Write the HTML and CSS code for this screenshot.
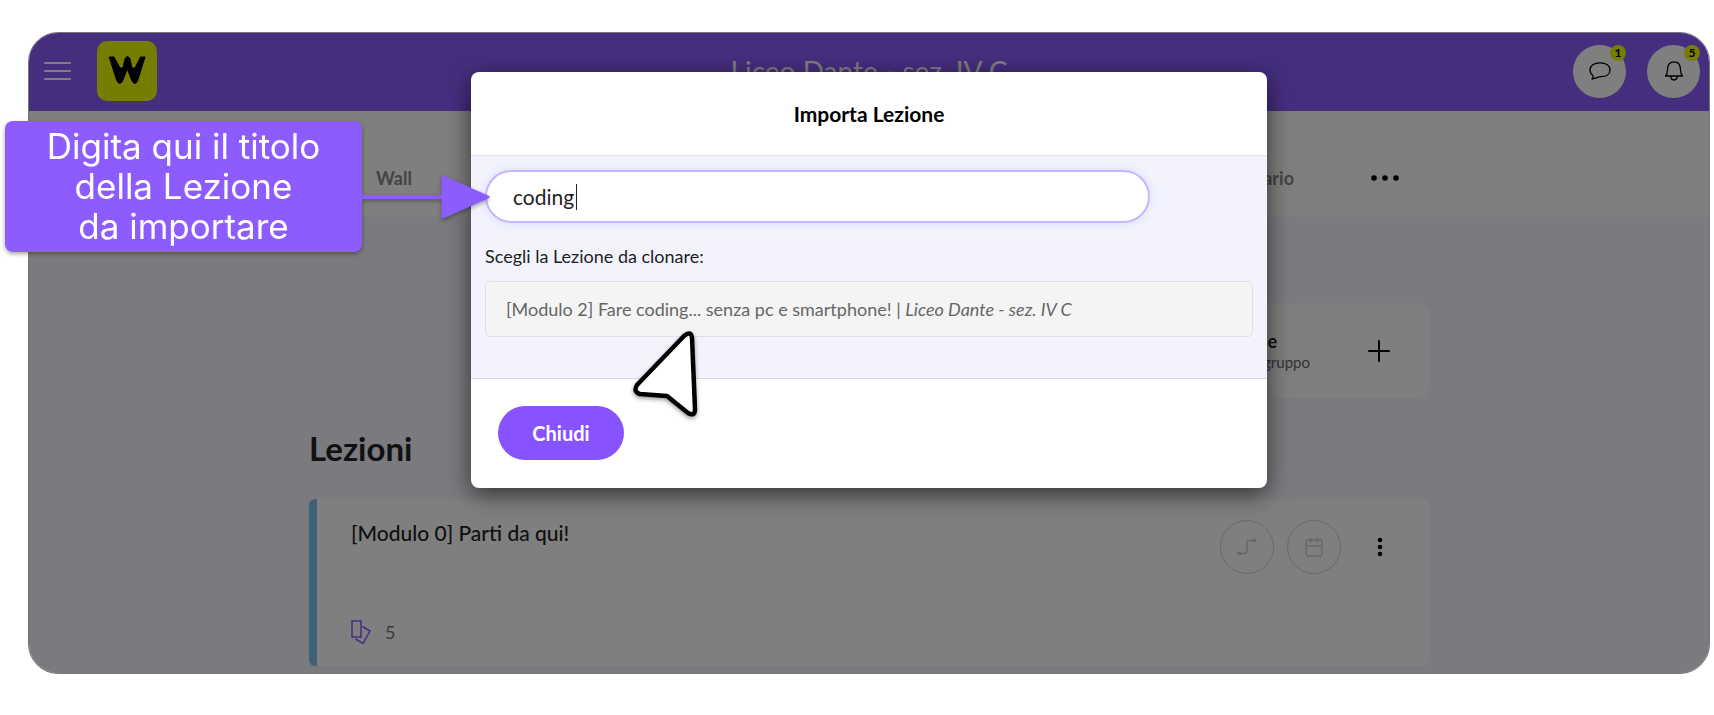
FILE: index.html
```
<!DOCTYPE html>
<html lang="it">
<head>
    <meta charset="UTF-8">
    <meta name="viewport" content="width=device-width, initial-scale=1.0">
    <title>Importa Lezione</title>
    <link rel="stylesheet" href="styles.css">
</head>
<body>
    <div class="app">
        <header class="topbar">
            <button class="menu-btn" aria-label="Menu"><span></span><span></span><span></span></button>
            <a class="logo" href="#" aria-label="Home">
                <svg viewBox="0 0 60 60" fill="none" stroke="#000" stroke-linecap="round" stroke-linejoin="round">
                    <path d="M12.500 16H17L23 27H26L28 18Q30.500 13 33 18L35 27H38L43.500 16H48L40.500 40Q38 45 35 40L30.300 28L25.500 40Q22.500 45 20 40Z" fill="#000" stroke-width="1"/>
                </svg>
            </a>
            <h1>Liceo Dante - sez. IV C</h1>
            <div class="topbar-actions">
                <button class="round-btn" aria-label="Messaggi">
                    <svg width="24" height="24" viewBox="0 0 24 24" fill="none" stroke="#000" stroke-width="1.3" stroke-linejoin="round">
                        <path d="M5 16.500C3 15 2 13.300 2 11C2 6.500 6 3.800 12 3.800S22 6.500 22 11S18 17.700 13 17.700C10 18 8 19.500 4 20C5.500 18.500 5.500 17.500 5 16.500Z"/>
                    </svg>
                    <span class="badge">1</span>
                </button>
                <button class="round-btn" aria-label="Notifiche">
                    <svg width="24" height="24" viewBox="0 0 24 24" fill="none" stroke="#000" stroke-width="1.3" stroke-linejoin="round">
                        <path d="M3.500 17C5 15.500 5.500 13 5.500 10.500C5.500 5.500 8 2.800 12 2.800S18.500 5.500 18.500 10.500C18.500 13 19 15.500 20.500 17ZM8.800 17C8.800 22.300 15.200 22.300 15.200 17"/>
                    </svg>
                    <span class="badge">5</span>
                </button>
            </div>
        </header>

        <nav class="tabs">
            <div class="tabs-inner">
                <a href="#">Wall</a>
                <a href="#" class="tab-last">Calendario</a>
                <button class="more-btn" aria-label="Altro">
                    <svg width="28" height="8" viewBox="0 0 28 8"><circle cx="3" cy="4" r="2.800"/><circle cx="14" cy="4" r="2.800"/><circle cx="25" cy="4" r="2.800"/></svg>
                </button>
            </div>
        </nav>

        <main class="content">
            <div class="new-lesson">
                <div>
                    <strong>Nuova Lezione</strong>
                    <p>Crea lezioni nel gruppo</p>
                </div>
                <button aria-label="Aggiungi">
                    <svg width="22" height="22" viewBox="0 0 22 22" fill="none" stroke="#000" stroke-width="2" stroke-linecap="round"><path d="M11 1V21M1 11H21"/></svg>
                </button>
            </div>

            <h2>Lezioni</h2>

            <article class="lesson">
                <div class="lesson-info">
                    <h3>[Modulo 0] Parti da qui!</h3>
                    <div class="lesson-count">
                        <svg width="20" height="24" viewBox="0 0 20 24" fill="none" stroke="#8c5cff" stroke-width="1.500">
                            <path d="M1 1H10V17H1ZM11.500 6.500L19 11L12 23.500L4.500 19"/>
                        </svg>
                        <span>5</span>
                    </div>
                </div>
                <div class="lesson-actions">
                    <button class="outline-btn" aria-label="Percorso">
                        <svg width="20" height="20" viewBox="0 0 20 20" fill="none" stroke="#cfcfcf" stroke-width="1.500" stroke-linejoin="round">
                            <path d="M3 16.500H7.500Q10 16.500 10 14V6Q10 3.500 12.500 3.500H16"/>
                            <path d="M1 15.500H4V17.500H1ZM16 2.500H18.500V4.500H16Z" fill="#cfcfcf"/>
                        </svg>
                    </button>
                    <button class="outline-btn" aria-label="Pianifica">
                        <svg width="20" height="20" viewBox="0 0 20 20" fill="none" stroke="#cfcfcf" stroke-width="1.300">
                            <rect x="2" y="3" width="16" height="16" rx="1.500"/><path d="M2 9H18M7 1V6M13 1V6"/>
                        </svg>
                    </button>
                    <button class="dots-btn" aria-label="Opzioni">
                        <svg width="6" height="20" viewBox="0 0 6 20"><circle cx="3" cy="3" r="2.300"/><circle cx="3" cy="10" r="2.300"/><circle cx="3" cy="17" r="2.300"/></svg>
                    </button>
                </div>
            </article>
        </main>

        <div class="overlay">
            <section class="modal" role="dialog" aria-labelledby="modalTitle">
                <div class="modal-header">
                    <h2 id="modalTitle">Importa Lezione</h2>
                </div>
                <div class="modal-body">
                    <div class="search">
                        <input type="text" value="coding" aria-label="Titolo della Lezione">
                        <span class="caret"></span>
                    </div>
                    <p>Scegli la Lezione da clonare:</p>
                    <button class="result">[Modulo 2] Fare coding... senza pc e smartphone! | <em>Liceo Dante - sez. IV C</em></button>
                    <svg class="pointer" width="80" height="92" viewBox="0 0 80 92">
                        <path d="M52 6Q59 0 60 8L63 79Q63 87 56 83L35 66L8 64Q1 62 5 55Z" fill="#fff" stroke="#000" stroke-width="4.500" stroke-linejoin="round"/>
                    </svg>
                </div>
                <div class="modal-footer">
                    <button class="close-btn">Chiudi</button>
                </div>
            </section>
        </div>
    </div>

    <div class="callout">
        <p>Digita qui il titolo<br>della Lezione<br>da importare</p>
        <span class="callout-line"></span>
        <svg width="49" height="44" viewBox="0 0 49 44"><path d="M2 2L47 22L2 42Z" fill="#8c5cff" stroke="#8c5cff" stroke-width="3" stroke-linejoin="round"/></svg>
    </div>
</body>
</html>
```
FILE: styles.css
```
:root {
    --primary: #8c5cff;
    --accent: #eefa00;
    --page: #f6f4fd;
    --body-font: Lato, "Open Sans", sans-serif;
}

* {
    margin: 0;
    padding: 0;
    box-sizing: border-box;
}

body {
    font-family: var(--body-font);
    font-size: 18px;
    background: #fff;
    color: #222;
}

button {
    font: inherit;
    background: none;
    border: none;
    cursor: pointer;
}

a {
    color: inherit;
    text-decoration: none;
}

svg {
    display: block;
}

.app {
    position: relative;
    margin: 32px 4px 40px 28px;
    border: 1px solid #777;
    border-radius: 30px;
    overflow: hidden;
    background: var(--page);
}

/* top bar */
.topbar {
    display: grid;
    grid-template-columns: 28px 60px 1fr auto;
    align-items: center;
    column-gap: 25px;
    height: 78px;
    padding: 0 9px 2px 15px;
    background: var(--primary);
}

.menu-btn {
    display: flex;
    flex-direction: column;
    gap: 6px;
}

.menu-btn span {
    height: 2px;
    width: 27px;
    border-radius: 1px;
    background: #fff;
}

.logo {
    height: 60px;
    border-radius: 10px;
    background: var(--accent);
}

.topbar h1 {
    padding-left: 8px;
    text-align: center;
    color: #fff;
    font-size: 28px;
    font-weight: 400;
    line-height: 36px;
}

.topbar-actions {
    display: flex;
    gap: 21px;
}

.round-btn {
    position: relative;
    display: flex;
    align-items: center;
    justify-content: center;
    width: 53px;
    height: 53px;
    border-radius: 50%;
    background: #fff;
}

.badge {
    position: absolute;
    top: 0;
    right: 0;
    min-width: 16px;
    height: 16px;
    padding: 0 4px;
    border-radius: 8px;
    background: var(--accent);
    font-size: 12px;
    font-weight: 700;
    line-height: 16px;
}

/* tabs */
.tabs {
    height: 106px;
    padding-top: 56px;
    background: #fff;
}

.tabs-inner {
    display: flex;
    align-items: center;
    max-width: 1120px;
    margin: 0 auto;
    padding: 0 30px 0 67px;
    color: #888;
    font-weight: 700;
    line-height: 22px;
}

.tab-last {
    margin-left: auto;
}

.more-btn {
    margin-left: 77px;
}

/* content */
.content {
    max-width: 1120px;
    margin: 0 auto;
    padding: 86px 0 7px;
}

.new-lesson {
    display: flex;
    align-items: center;
    justify-content: flex-end;
    gap: 58px;
    width: 360px;
    height: 95px;
    margin-left: auto;
    padding-right: 39px;
    border-radius: 10px;
    background: #fff;
}

.new-lesson p {
    color: #666;
    font-size: 15px;
    line-height: 20px;
}

.content h2 {
    margin: 30px 0 31px;
    font-size: 33px;
    line-height: 40px;
}

.lesson {
    display: flex;
    justify-content: space-between;
    min-height: 167px;
    padding: 21px 46px 22px 34px;
    border-left: 8px solid #7cc2ee;
    border-radius: 6px;
    background: #fff;
}

.lesson-info {
    display: flex;
    flex-direction: column;
    justify-content: space-between;
}

.lesson h3 {
    font-size: 21px;
    font-weight: 500;
    line-height: 26px;
}

.lesson-count {
    display: flex;
    align-items: center;
    gap: 14px;
    color: #777;
}

.lesson-actions {
    display: flex;
    align-items: center;
    align-self: flex-start;
    gap: 13px;
}

.outline-btn {
    display: flex;
    align-items: center;
    justify-content: center;
    width: 54px;
    height: 54px;
    border: 1px solid #d4d4d4;
    border-radius: 50%;
}

.dots-btn {
    margin-left: 23px;
}

/* modal */
.overlay {
    position: absolute;
    inset: 0;
    display: flex;
    justify-content: center;
    align-items: flex-start;
    padding-top: 39px;
    background: rgba(0, 0, 0, 0.5);
}

.modal {
    width: 100%;
    max-width: 796px;
    border-radius: 8px;
    background: #fff;
    box-shadow: 0 6px 24px rgba(0, 0, 0, 0.6);
}

.modal-header {
    padding: 31px 14px 30px;
    text-align: center;
}

.modal-header h2 {
    color: #000;
    font-size: 21px;
    line-height: 22px;
}

.modal-body {
    position: relative;
    padding: 14px 14px 41px;
    border-top: 1px solid #e2e2e6;
    border-bottom: 1px solid #d8d8dc;
    background: #f3f3fd;
}

.search {
    position: relative;
    max-width: 665px;
}

.search input {
    width: 100%;
    height: 53px;
    padding: 0 26px;
    border: 2px solid #c9b5ff;
    border-radius: 27px;
    outline: none;
    background: #fff;
    box-shadow: 0 0 10px #d3ddfa;
    color: #222;
    font: 21px var(--body-font);
}

.caret {
    position: absolute;
    top: 14px;
    left: 91px;
    width: 1px;
    height: 26px;
    background: #222;
}

.modal-body p {
    margin: 22px 0 14px;
    line-height: 22px;
}

.result {
    display: block;
    width: 100%;
    padding: 16px 20px;
    border: 1px solid #e0e0e4;
    border-radius: 5px;
    background: #f4f4f4;
    color: #666;
    line-height: 22px;
    text-align: left;
}

.pointer {
    position: absolute;
    top: 174px;
    left: 161px;
    filter: drop-shadow(0 2px 2px rgba(0, 0, 0, 0.4));
}

.modal-footer {
    padding: 27px 27px 28px;
}

.close-btn {
    width: 126px;
    height: 54px;
    border-radius: 27px;
    background: #8653ff;
    color: #fff;
    font-size: 20px;
    font-weight: 700;
}

/* callout over the page */
.callout {
    position: absolute;
    top: 121px;
    left: 5px;
    display: flex;
    align-items: center;
    filter: drop-shadow(0 2px 2px rgba(0, 0, 0, 0.35));
}

.callout p {
    width: 357px;
    padding: 5px 0 6px;
    border-radius: 8px;
    background: var(--primary);
    color: #fff;
    font-family: Inter, sans-serif;
    font-size: 35px;
    line-height: 40px;
    text-align: center;
}

.callout-line {
    width: 80px;
    height: 4px;
    margin-top: 20px;
    background: var(--primary);
}

.callout svg {
    margin: 20px 0 0 -1px;
}
```
